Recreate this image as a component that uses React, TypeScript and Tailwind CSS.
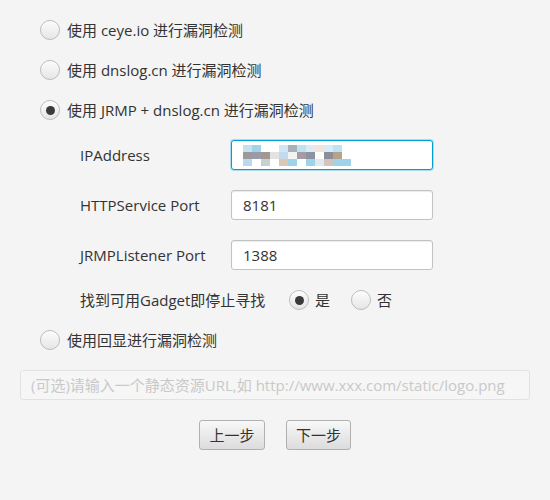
import React from "react";

const font = { fontFamily: '"Open Sans", "Noto Sans CJK SC", sans-serif' };

function Radio({ checked }: { checked?: boolean }) {
  return (
    <div className="w-[20px] h-[20px] rounded-full border border-[#bcbcbc] bg-gradient-to-b from-[#fcfcfc] to-[#e6e6e6] flex items-center justify-center shadow-[inset_0_1px_0_#ffffff] shrink-0">
      {checked && <div className="w-[9px] h-[9px] rounded-full bg-[#3a3a3a]" />}
    </div>
  );
}

function RadioRow({ label, checked }: { label: string; checked?: boolean }) {
  return (
    <div className="h-[40px] flex items-center pl-[40px] gap-[7px]">
      <Radio checked={checked} />
      <span className="text-[15px] text-[#333]">{label}</span>
    </div>
  );
}

function Field({ label, value, focused, children }: { label: string; value?: string; focused?: boolean; children?: React.ReactNode }) {
  return (
    <div className="h-[50px] flex items-center pl-[80px]">
      <span className="w-[151px] text-[15px] text-[#333]">{label}</span>
      <div
        className={
          focused
            ? "w-[202px] h-[30px] rounded-[3px] border border-[#039ed3] bg-white shadow-[0_0_0_1px_#a8dcef] flex items-center px-[11px] text-[15px] text-[#333]"
            : "w-[202px] h-[30px] rounded-[3px] border border-[#c2c2c2] bg-white shadow-[inset_0_1px_1px_#ececec] flex items-center px-[11px] text-[15px] text-[#333]"
        }
      >
        {value}
        {children}
      </div>
    </div>
  );
}

const pix = [
  ["#c8dff0", "#9fd3ea", "#fff", "#fff", "#cfe6f4", "#a7b1ba", "#bfe2f2", "#dfeaf2", "#f2e4d8", "#d8ecf7", "#bde3f3", "#fff"],
  ["#9a9a9a", "#9a9aa8", "#a39890", "#e3e3e3", "#c6d9ea", "#f3f3f3", "#a39ca2", "#8c94a2", "#fff", "#8e8e98", "#b3a28e", "#fff"],
  ["#bcd8ee", "#fff", "#c5d1d2", "#fff", "#d8c8b9", "#9fd3ea", "#fff", "#9fd3ea", "#e0e8f0", "#d2c4bd", "#9fd3ea", "#9fd3ea"],
];

export default function App() {
  return (
    <div className="w-[550px] h-[500px] bg-[#f4f4f4] pt-[10px]" style={font}>
      <RadioRow label="使用 ceye.io 进行漏洞检测" />
      <RadioRow label="使用 dnslog.cn 进行漏洞检测" />
      <RadioRow label="使用 JRMP + dnslog.cn 进行漏洞检测" checked />
      <Field label="IPAddress" focused>
        <div className="flex flex-col">
          {pix.map((row, i) => (
            <div key={i} className="flex">
              {row.map((c, j) => (
                <div key={j} className="w-[9px] h-[7px]" style={{ backgroundColor: c }} />
              ))}
            </div>
          ))}
        </div>
      </Field>
      <Field label="HTTPService Port" value="8181" />
      <Field label="JRMPListener Port" value="1388" />
      <div className="h-[40px] flex items-center pl-[80px] text-[15px] text-[#333]">
        <span className="w-[209px]">找到可用Gadget即停止寻找</span>
        <Radio checked />
        <span className="ml-[6px] w-[36px]">是</span>
        <Radio />
        <span className="ml-[6px]">否</span>
      </div>
      <RadioRow label="使用回显进行漏洞检测" />
      <div className="px-[20px] mt-[10px]">
        <div className="h-[30px] w-[510px] rounded-[3px] border border-[#e2e2e2] bg-[#f6f6f6] flex items-center px-[10px] text-[15px] text-[#c9c9c9] whitespace-nowrap overflow-hidden">
          (可选)请输入一个静态资源URL,如 http://www.xxx.com/static/logo.png
        </div>
      </div>
      <div className="mt-[20px] flex justify-center gap-[21px]">
        <button className="w-[66px] h-[30px] rounded-[3px] border border-[#b0b0b0] bg-gradient-to-b from-[#f8f8f8] to-[#dcdcdc] text-[15px] text-[#333] flex items-center justify-center">
          上一步
        </button>
        <button className="w-[65px] h-[30px] rounded-[3px] border border-[#b0b0b0] bg-gradient-to-b from-[#f8f8f8] to-[#dcdcdc] text-[15px] text-[#333] flex items-center justify-center">
          下一步
        </button>
      </div>
    </div>
  );
}
